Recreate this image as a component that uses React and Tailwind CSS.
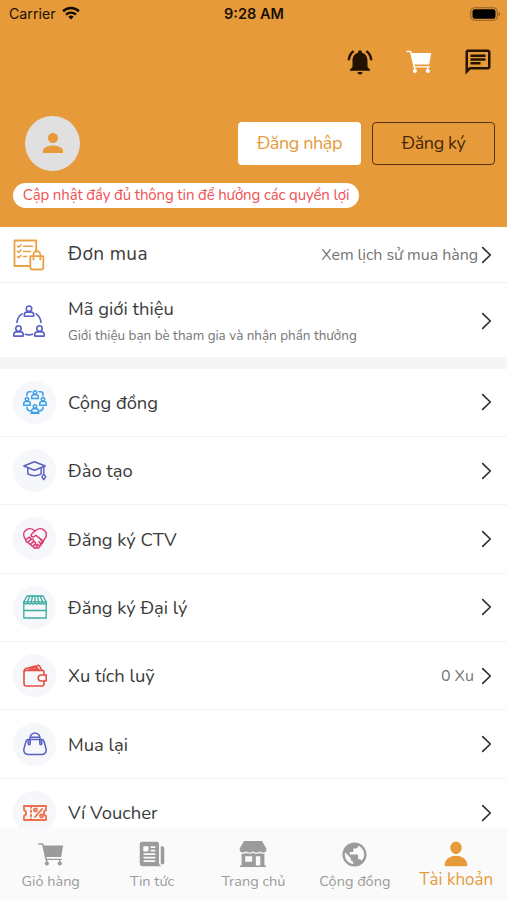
import React from "react";
import { MdNotificationsActive, MdOutlineChat, MdPerson, MdPublic } from "react-icons/md";
import { IoNewspaper, IoPerson } from "react-icons/io5";

const line = {
  fill: "none",
  stroke: "currentColor",
  strokeLinecap: "round",
  strokeLinejoin: "round",
};

function Wifi() {
  return (
    <svg className="h-[14px] w-[18px]" viewBox="0 0 18 14" fill="none" stroke="#140b02" strokeWidth="2.5">
      <path d="M1.1 5.3a11.4 11.4 0 0 1 15.8 0" />
      <path d="M4 8.6a7.2 7.2 0 0 1 10 0" strokeWidth="2.3" />
      <path d="M9 13.4 6.3 10.8a3.9 3.9 0 0 1 5.4 0z" fill="#140b02" stroke="none" />
    </svg>
  );
}

function Battery() {
  return (
    <svg className="h-[14px] w-[31px]" viewBox="0 0 31 14">
      <rect x="0.8" y="0.7" width="26.5" height="12.6" rx="3.8" fill="none" stroke="#946126" strokeWidth="1.1" />
      <rect x="2.5" y="2.3" width="23" height="9.4" rx="2.2" fill="#000" />
      <path d="M28.6 4.9c2 .7 2 3.5 0 4.2z" fill="#946126" />
    </svg>
  );
}

function Cart({ className }) {
  return (
    <svg className={className} viewBox="0 0 26 24" fill="currentColor">
      <path d="M.5.8h4.6l.8 2.3h19.3l-2 11.5H8.5l.3 1.6h15v1.2H7.5L4.1 2.3H.5z" />
      <circle cx="8.9" cy="21" r="2.1" />
      <circle cx="21.8" cy="21" r="2.1" />
      <path d="M8 17h1.4v3H8zM21 17h1.4v3H21z" />
    </svg>
  );
}

function Store() {
  return (
    <svg className="h-[26px] w-[28px]" viewBox="0 0 28 26" fill="currentColor">
      <path d="M5 0h18l4.300 7.500c.5 2.300-.900 4-2.900 4-1.500 0-2.700-.400-3.400-1.300-.800.900-2 1.300-3.500 1.300S14.800 11.100 14 10.200c-.8.9-2 1.300-3.500 1.300S7.800 11.100 7 10.200c-.7.9-1.900 1.300-3.400 1.300-2 0-3.400-1.700-2.900-4z" />
      <path fillRule="evenodd" d="M2.600 12.800c1.700.2 3.200-.1 4.400-.8 2 1.100 5 1.100 7 0 2 1.100 5 1.100 7 0 1.200.7 2.700 1 4.400.8v11.700h1.600V26H1v-1.500h1.600zM6.200 15.200v5.600h7v-5.600zm10.600 0v9.300h4.500v-9.300z" />
    </svg>
  );
}

function Orders() {
  return (
    <svg className="h-[32px] w-[32px] text-[#e9a146]" viewBox="0 0 32 32" {...line} strokeWidth="1.800">
      <path d="M16 27H1.500V1.500h21.700v11.200" />
      <path d="m4.500 7 1.200 1.200L8 5.800m-3.500 6.500 1.200 1.200L8 11m-3.500 6.600 1.200 1.200L8 16.500M10.500 7.200h9M10.500 12.500h7M10.500 17.500h3" strokeWidth="1.600" />
      <path d="M17.300 17.200h13v11q0 2.300-2.300 2.300h-8.400q-2.300 0-2.300-2.300z" />
      <path d="M20.500 20.500v-5a3.400 3.400 0 0 1 6.800 0v5" />
    </svg>
  );
}

function Referral() {
  return (
    <svg className="h-[32px] w-[32px] text-[#5961c3]" viewBox="0 0 32 32" {...line} strokeWidth="1.600">
      {[[16, 0.5], [5.5, 20.3], [26.5, 20.3]].map(([x, y]) => (
        <g key={x} transform={`translate(${x} ${y})`}>
          <circle cx="0" cy="3.200" r="2.700" />
          <path d="M-4.700 10.800V9.300q0-2.700 2.600-2.700h4.200q2.600 0 2.600 2.700v1.500z" />
        </g>
      ))}
      <path d="M9 8.800Q4.300 12 4 17.500M23 8.800q4.700 3.200 5 8.700M12.500 29.200q3.500 1.300 7 0" />
    </svg>
  );
}

function Community() {
  return (
    <svg className="h-[24px] w-[24px] text-[#399fe9]" viewBox="0 0 24 24" {...line} strokeWidth="1.500">
      {[[12, 0.3], [4, 7.1], [20, 7.1], [12, 14.2]].map(([x, y]) => (
        <g key={`${x}-${y}`} transform={`translate(${x} ${y})`}>
          <circle cx="0" cy="2.200" r="1.700" />
          <path d="M-3.300 8.200V6.700q0-2.200 2.200-2.200h2.200q2.200 0 2.200 2.200v1.500z" />
        </g>
      ))}
      <path d="M8 1.800H6.600Q4 1.800 4 4v1.500M16 1.800h1.400q2.600 0 2.600 2.200v1.500M4 17.300v1q0 2.200 3.500 2.700M20 17.300v1q0 2.200-3.500 2.700M8 23.200h8" />
    </svg>
  );
}

function Training() {
  return (
    <svg className="h-[24px] w-[24px] text-[#5961c3]" viewBox="0 0 24 24" {...line} strokeWidth="1.500">
      <path d="M.8 7 11.500 2.800 22.200 7l-10.700 4.300z" />
      <path d="M4.800 9v5.800q6.700 3.800 13.400 0V9" />
      <path d="M20.800 8v8M20.800 15.300l2 2.600-2 2.800-2-2.800z" strokeWidth="1.400" />
    </svg>
  );
}

function Partner() {
  return (
    <svg className="h-[24px] w-[24px] text-[#de3c70]" viewBox="0 0 24 24" {...line} strokeWidth="1.500">
      <path d="M3 13C0 9.500.2 5.800 2.300 3.700 5 .900 9 1.200 12 4c3-2.800 7-3.100 9.700-.3 2.400 2.500 2 6.300-1 9.600l-3.400 3.600" />
      <path d="M12 4 8.500 7.300c-.8 1-.4 2.200.7 2.500 1.500.4 2.600-.3 3.800-1.500l7.500 6M3 13l2.300-2.300c1.500-1 3 .7 2 2.100l-2 2.200c-1.500.9-2.900-.9-2.300-2M5.300 15l3-2.700c1.500-.8 2.900.7 2 2.100l-2.300 2.500c-1.400.8-2.900-.8-2.700-1.900M8 17l2.500-2.200c1.500-.6 2.700.8 1.800 2.200l-2 2c-1.400.7-2.600-.8-2.300-2M10.500 19.200l1.700-1.500c1.500-.4 2.400.9 1.600 2.100l-1.300 1.300c-1.400.5-2.400-.8-2-1.900" />
      <path d="M14 20.800c1.500.8 2.800-.6 2-2.100l-1.500-1.500m1.600 1.700c1.600.5 2.700-1 1.700-2.400l-2-1.800m2.200 1.900c1.400.2 2.400-1 1.600-2.200l-2.200-2" />
    </svg>
  );
}

function Agency() {
  return (
    <svg className="h-[24px] w-[24px] text-[#3caca0]" viewBox="0 0 24 24" {...line} strokeWidth="1.300">
      <path d="M.8 6.800 4 1h16l3.200 5.800zM.8 7v16h22.400V7M1 15.500h22" />
      <path d="M.8 6.800c0 2.900 3.700 2.900 3.700 0 0 2.900 3.800 2.900 3.800 0 0 2.900 3.700 2.900 3.700 0 0 2.900 3.700 2.900 3.700 0 0 2.900 3.800 2.900 3.800 0 0 2.900 3.700 2.900 3.700 0M4.500 6.800 6.800 1M8.300 6.800 9.500 1M12 6.800V1M15.700 6.800 14.500 1M19.500 6.800 17.200 1" />
    </svg>
  );
}

function Coins() {
  return (
    <svg className="h-[24px] w-[24px] text-[#e74e45]" viewBox="0 0 24 24" {...line} strokeWidth="1.600">
      <path d="M21 11V7.800q0-1.300-1.300-1.300H3Q1 6.500 1 8v11.500Q1 22 3.200 22h15.600q2.200 0 2.200-2.200V17" />
      <path d="M23.200 11h-5a3 3 0 0 0 0 6h5zM1.200 7.500q0-2.500 2-3L12.500 2l3.800 4.300M5 6.200l8-3.500 1.600-1.200q1-.6 1.800.4L19 6.300M9.500 6.200l4-1.500M12 6.200l3-1" />
    </svg>
  );
}

function Handbag() {
  return (
    <svg className="h-[24px] w-[24px] text-[#5961c3]" viewBox="0 0 24 24" {...line} strokeWidth="1.500">
      <path d="M5 7.500h14q1.300 0 1.900 1.500l2.100 7.700c.8 3-1 5.800-4 5.800H5c-3 0-4.800-2.800-4-5.800L3.100 9Q3.700 7.500 5 7.500z" />
      <path d="M7 11.500V6a5 5 0 0 1 10 0v5.500M5.200 7.700v3.500q0 1.500 1 1.500t1-1.500V7.700M16.800 7.700v3.500q0 1.500 1 1.500t1-1.500V7.700M7.500 5.200h9" />
    </svg>
  );
}

function Voucher() {
  return (
    <svg className="h-[24px] w-[24px] text-[#ee6f4b]" viewBox="0 0 24 24" {...line} strokeWidth="1.800">
      <path d="M1 5h22v4.200c-2.800.6-2.800 5 0 5.600V19H1v-4.200c2.800-.6 2.800-5 0-5.600z" />
      <path d="M8 5v14" strokeDasharray="1.800 2.500" />
      <path d="m19 8-7 8" />
      <circle cx="12.500" cy="9" r="1.500" />
      <circle cx="18.500" cy="15" r="1.500" />
    </svg>
  );
}

function Chevron() {
  return (
    <svg className="h-[18px] w-[12px] shrink-0 text-[#303030]" viewBox="0 0 12 18" {...line} strokeWidth="1.700">
      <path d="m1.700 1.700 7.600 7.300-7.600 7.300" />
    </svg>
  );
}

const items = [
  { label: "Cộng đồng", icon: Community },
  { label: "Đào tạo", icon: Training },
  { label: "Đăng ký CTV", icon: Partner },
  { label: "Đăng ký Đại lý", icon: Agency },
  { label: "Xu tích luỹ", icon: Coins, value: "0 Xu" },
  { label: "Mua lại", icon: Handbag },
  { label: "Ví Voucher", icon: Voucher },
];

const tabs = [
  { label: "Giỏ hàng", icon: <Cart className="h-[25px] w-[26px]" /> },
  { label: "Tin tức", icon: <IoNewspaper size={28} /> },
  { label: "Trang chủ", icon: <Store /> },
  { label: "Cộng đồng", icon: <MdPublic size={29} /> },
];

export default function App() {
  return (
    <div className="flex h-[900px] w-[507px] flex-col overflow-hidden whitespace-nowrap bg-white font-['Nunito','Lato','Noto_Sans',sans-serif] text-[#3b3b3b]">
      <header className="h-[227px] shrink-0 bg-[#e79a3a]">
        <div className="grid h-[27px] grid-cols-3 items-center pl-[9px] pr-[6px] font-['Inter','Roboto',sans-serif] text-[14.2px] text-[#1a0f03]">
          <div className="flex items-center gap-[6px]">
            <span>Carrier</span>
            <Wifi />
          </div>
          <span className="pr-[2px] text-center text-[14.5px] font-semibold">9:28 AM</span>
          <div className="flex justify-end">
            <Battery />
          </div>
        </div>
        <div className="flex h-[70px] items-center justify-end gap-[31px] pr-[14px] text-[#241300]">
          <MdNotificationsActive size={30} />
          <Cart className="h-[24px] w-[26px] text-white" />
          <MdOutlineChat size={30} />
        </div>
        <div className="flex h-[92px] items-center pl-[25px] pr-[12px]">
          <div className="flex size-[55px] items-center justify-center rounded-full bg-[#e0e0e0] text-[#e79a3a]">
            <MdPerson size={30} />
          </div>
          <button className="ml-auto h-[43px] w-[123px] rounded-[4px] bg-white text-[18px] tracking-[-0.4px] text-[#e79a3a]">Đăng nhập</button>
          <button className="ml-[11px] h-[43px] w-[123px] rounded-[4px] border-[1.5px] border-[#573409] text-[18px] tracking-[-0.4px] text-[#452806]">Đăng ký</button>
        </div>
        <div className="ml-[13px] mt-[-6px] flex h-[25px] w-[346px] items-center justify-center rounded-full bg-white text-[15px] tracking-[-0.13px] text-[#ed5355]">
          Cập nhật đầy đủ thông tin để hưởng các quyền lợi
        </div>
      </header>

      <div className="flex h-[56px] shrink-0 items-center border-b border-[#f0f0f0] pl-[13px] pr-[14px]">
        <Orders />
        <span className="ml-[23px] text-[19px] tracking-[0.35px]">Đơn mua</span>
        <span className="ml-auto mr-[3px] text-[16px] tracking-[-0.05px] text-[#757575]">Xem lịch sử mua hàng</span>
        <Chevron />
      </div>
      <div className="flex h-[74px] shrink-0 items-center pl-[13px] pr-[14px] pt-[2px]">
        <Referral />
        <div className="ml-[23px] flex flex-col gap-[4px]">
          <span className="text-[18.4px] leading-[26px]">Mã giới thiệu</span>
          <span className="text-[13.45px] leading-[20px] text-[#757575]">Giới thiệu bạn bè tham gia và nhận phần thưởng</span>
        </div>
        <div className="ml-auto">
          <Chevron />
        </div>
      </div>
      <div className="h-[11.5px] shrink-0 bg-[#f5f5f5]" />

      <main className="min-h-0 flex-1 overflow-hidden">
        {items.map(({ label, icon: Icon, value }) => (
          <div key={label} className="flex h-[68.4px] items-center border-b border-[#f3f3f3] pl-[13px] pr-[14px]">
            <div className="flex size-[43px] items-center justify-center rounded-full bg-[#f5f7fa]">
              <Icon />
            </div>
            <span className="ml-[12px] pt-[1px] text-[18.4px]">{label}</span>
            <span className="ml-auto mr-[7px] text-[16px] text-[#757575]">{value}</span>
            <Chevron />
          </div>
        ))}
      </main>

      <nav className="grid h-[72px] shrink-0 grid-cols-5 bg-[#fafafa] text-[#9b9b9b]">
        {tabs.map(({ label, icon }) => (
          <div key={label} className="flex flex-col items-center pt-[12px]">
            <div className="flex h-[28px] items-center">{icon}</div>
            <span className="mt-[3px] text-[14.5px] leading-[20px]">{label}</span>
          </div>
        ))}
        <div className="flex flex-col items-center pt-[12px] text-[#e79a3a]">
          <div className="flex h-[28px] items-center">
            <IoPerson size={28} />
          </div>
          <span className="text-[17px] leading-[24px]">Tài khoản</span>
        </div>
      </nav>
    </div>
  );
}
